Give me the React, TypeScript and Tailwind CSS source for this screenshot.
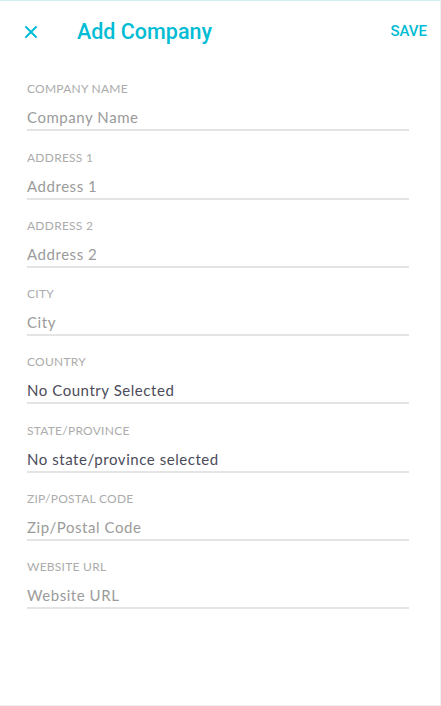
import { X } from "lucide-react";

const fields = [
  { label: "COMPANY NAME", text: "Company Name", filled: false },
  { label: "ADDRESS 1", text: "Address 1", filled: false },
  { label: "ADDRESS 2", text: "Address 2", filled: false },
  { label: "CITY", text: "City", filled: false },
  { label: "COUNTRY", text: "No Country Selected", filled: true },
  { label: "STATE/PROVINCE", text: "No state/province selected", filled: true },
  { label: "ZIP/POSTAL CODE", text: "Zip/Postal Code", filled: false },
  { label: "WEBSITE URL", text: "Website URL", filled: false },
];

export default function App() {
  return (
    <div className="w-[441px] h-[706px] bg-white border-t border-t-[#d2eff4] border-r border-r-[#f0f0f0] border-b border-b-[#f0f0f0] overflow-hidden">
      <header className="h-[61px] flex items-center pl-[21px] pr-[13px] font-['Roboto',sans-serif]">
        <X className="w-[20px] h-[20px] text-[#00bcd4]" strokeWidth={2.4} />
        <h1 className="ml-[36px] text-[21.5px] font-medium text-[#00bcd4] leading-none">
          Add Company
        </h1>
        <button className="ml-auto text-[15px] font-medium text-[#00bcd4] leading-none">SAVE</button>
      </header>

      <form className="pt-[1px] pl-[27px] pr-[31px] font-['Lato',sans-serif]">
        {fields.map((f) => (
          <div key={f.label} className="pt-[18.3px]">
            <div className="text-[12px] leading-[16px] tracking-[0.25px] text-[#acacac]">{f.label}</div>
            <div
              className={
                "mt-[10px] pb-[2px] text-[15px] leading-[20px] tracking-[0.55px] border-b-2 border-[#e4e4e4] " +
                (f.filled ? "text-[#4b4b5a]" : "text-[#9b9b9b]")
              }
            >
              {f.text}
            </div>
          </div>
        ))}
      </form>
    </div>
  );
}
